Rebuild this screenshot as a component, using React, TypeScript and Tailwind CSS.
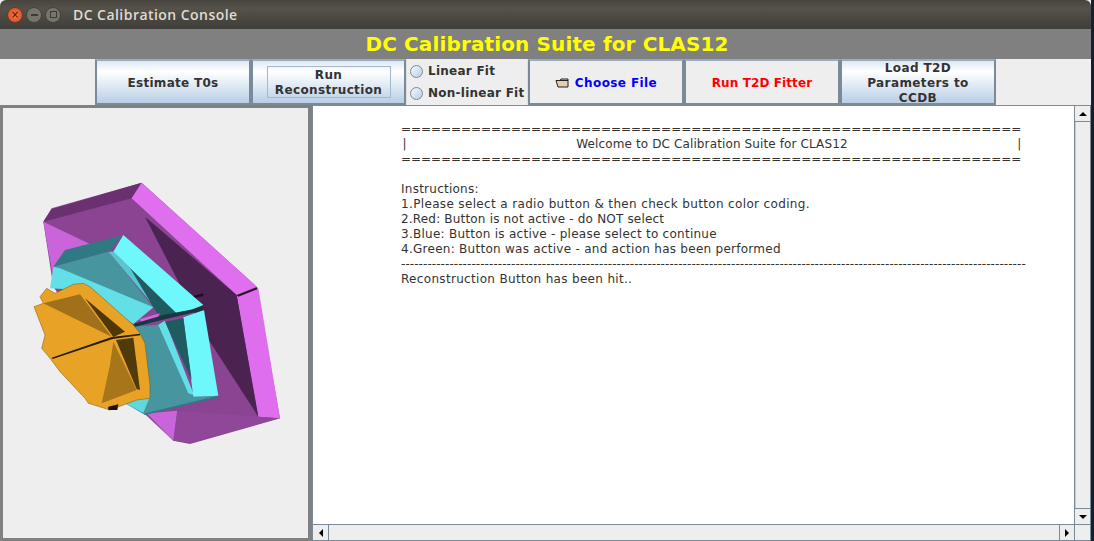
const sans = "font-['DejaVu_Sans','Liberation_Sans',sans-serif]";

const btnGrad = "bg-[linear-gradient(to_bottom,#dde8f3_0%,#ffffff_25%,#b8cfe5_100%)]";

function ToolButton({
  className,
  children,
}: {
  className: string;
  children: React.ReactNode;
}) {
  return (
    <div
      className={
        "h-[46px] pt-[2px] flex items-center justify-center text-center border-[2px] border-[#7a8a99] border-t-[#9aabbb] text-[12px] font-bold leading-[15px] whitespace-nowrap " +
        className
      }
    >
      {children}
    </div>
  );
}

function Radio({ label }: { label: string }) {
  return (
    <div className="flex items-center gap-[5px] h-[22px] pl-[3px]">
      <div className="w-[13px] h-[13px] rounded-full border border-[#7a8a99] bg-[linear-gradient(135deg,#f4f8fc,#b8cfe5)]" />
      <span className="text-[12px] font-bold tracking-[0.25px] whitespace-nowrap text-[#333333]">{label}</span>
    </div>
  );
}

function Detector() {
  return (
    <svg className="w-[305px] h-[429px]" viewBox="3 108 305 429">
      {/* outer magenta frame */}
      <g transform="translate(20 170) scale(0.3333)">
        <polygon points="70,155 95,115 365,38 710,350 780,745 510,822 460,812 340,700 100,350" fill="#8a4492" />
        <polygon points="95,118 365,38 335,85 70,155" fill="#6b3070" />
        <polygon points="365,38 710,350 650,375 335,85" fill="#e06ff0" />
        <polygon points="650,375 715,355 780,745 715,740" fill="#df6eef" />
        <polygon points="70,155 210,222 100,290 105,355" fill="#c964da" />
        <polygon points="375,140 650,375 715,740 560,500" fill="#4a2350" />
        <polygon points="380,730 472,722 460,812" fill="#c964da" />
        <polygon points="472,722 715,740 780,745 510,818 460,812" fill="#90479a" />
        <polygon points="650,375 712,352 712,358 655,380" fill="#2a1430" />
        <polygon points="520,378 550,370 550,378 522,384" fill="#1c0e20" />
      </g>
      {/* cyan frame */}
      <g transform="translate(50 230) scale(0.3333)">
        <polygon points="10,110 45,60 220,15 175,65" fill="#2f7a82" />
        <polygon points="10,110 175,65 310,232 250,282" fill="#47959e" />
        <polygon points="10,110 30,115 310,232 250,282 90,180 0,175" fill="#62dfe7" />
        <polygon points="175,65 190,65 385,255 340,262" fill="#55c8cf" />
        <polygon points="235,105 385,252 330,265" fill="#1e5c62" />
        <polygon points="190,65 220,15 460,225 385,255" fill="#6ef8fc" />
        <polygon points="240,290 320,285 345,272 430,500 505,497 280,552 225,520 240,480" fill="#47959e" />
        <polygon points="225,520 270,490 300,500 280,548" fill="#5fd8e0" />
        <polygon points="280,552 505,497 505,503 285,555" fill="#2f7a82" />
        <polygon points="325,285 345,272 432,495 415,490" fill="#62dfe7" />
        <polygon points="400,262 462,240 505,497 430,500" fill="#6ef8fc" />
        <polygon points="345,275 400,265 425,450" fill="#1e5c62" />
        <polygon points="268,268 330,250 322,265 275,275" fill="#d066e0" />
        <polygon points="250,282 340,255 460,232 462,240 345,268 255,290" fill="#17393e" />
      </g>
      {/* orange end cap */}
      <g transform="translate(30 275) scale(0.3333)">
        <polygon
          points="12,95 40,85 30,65 50,40 75,55 130,28 160,25 180,35 310,150 330,175 345,205 360,330 360,370 320,375 240,405 175,385 165,370 90,290 60,250 35,220 45,180"
          fill="#e8a226"
          stroke="#7a560e"
          strokeWidth="1.5"
        />
        <polygon points="40,85 150,58 245,185" fill="#a0701a" />
        <polygon points="165,70 285,170 250,186" fill="#4f3808" />
        <polygon points="258,195 310,188 330,345 320,342" fill="#503a08" />
        <polygon points="250,200 320,345 215,385 240,270" fill="#a8761a" />
        <polygon points="65,248 245,186 330,176 330,181 248,192 68,252" fill="#2a1e06" />
        <polygon points="235,395 265,388 262,405 235,405" fill="#1c1404" />
      </g>
    </svg>
  );
}

export default function App() {
  return (
    <div className={"w-[1094px] h-[541px] overflow-hidden bg-[#16202c] " + sans}>
      <div className="w-[1091px] h-[541px] flex flex-col bg-[#eeeeee]">
        {/* window title bar */}
        <div className="h-[29px] shrink-0 flex items-center rounded-t-[6px] bg-[linear-gradient(to_bottom,#47443e_0%,#56524a_30%,#3e3d38_100%)]">
          <div className="flex items-center ml-[7px] gap-[3px]">
            <div className="w-[16px] h-[16px] rounded-full bg-[radial-gradient(circle,#f0794a,#d9471f)] border border-[#6b3a22] flex items-center justify-center text-[#3a1a10] text-[10px] leading-none">
              ×
            </div>
            <div className="w-[16px] h-[16px] rounded-full bg-[#77746b] border border-[#45433d] flex items-center justify-center">
              <div className="w-[7px] h-[2px] bg-[#3c3b37]" />
            </div>
            <div className="w-[16px] h-[16px] rounded-full bg-[#77746b] border border-[#45433d] flex items-center justify-center">
              <div className="w-[7px] h-[7px] border border-[#3c3b37]" />
            </div>
          </div>
          <span className="ml-[12px] font-['Open_Sans'] text-[14px] font-semibold tracking-[0.45px] text-[#dfdbd2]">
            DC Calibration Console
          </span>
        </div>

        {/* heading */}
        <div className="h-[30px] shrink-0 flex items-center justify-center pl-[3px] bg-[#808080] text-[#ffff00] text-[20px] font-bold tracking-[0.13px]">
          DC Calibration Suite for CLAS12
        </div>

        {/* toolbar */}
        <div className="h-[46px] shrink-0 flex pl-[95px] bg-[#eeeeee]">
          <ToolButton className={"w-[156px] text-[#333333] tracking-[0.3px] " + btnGrad}>Estimate T0s</ToolButton>
          <ToolButton className={"w-[155px] text-[#333333] tracking-[0.35px] " + btnGrad}>
            <div className="w-[124px] h-[32px] -mt-[2px] pt-[1px] border border-[#a3b8cc] flex items-center justify-center">
              Run
              <br />
              Reconstruction
            </div>
          </ToolButton>
          <div className="w-[122px] h-[46px] pt-[1px] border-x border-[#e0e0e0] bg-[#eeeeee]">
            <Radio label="Linear Fit" />
            <Radio label="Non-linear Fit" />
          </div>
          <ToolButton className="w-[156px] bg-[#eeeeee] text-[#0000ff] gap-[6px] tracking-[0.4px]">
            <svg width="14" height="10" viewBox="0 0 14 10">
              <path d="M1 2.5h4l1-1.5h7v8H3z" fill="#e8cdb0" stroke="#222" strokeWidth="1" />
              <path d="M1 2.5h12" stroke="#222" strokeWidth="1" />
            </svg>
            Choose File
          </ToolButton>
          <ToolButton className="w-[156px] bg-[#eeeeee] text-[#ff0000] tracking-[0.1px]">Run T2D Fitter</ToolButton>
          <ToolButton className={"w-[156px] text-[#333333] tracking-[0.4px] " + btnGrad}>
            Load T2D
            <br />
            Parameters to
            <br />
            CCDB
          </ToolButton>
        </div>

        {/* main area */}
        <div className="flex-1 flex min-h-0">
          <div className="w-[312px] shrink-0 border-[3px] border-r-[4px] border-[#808080] bg-[#eeeeee]">
            <Detector />
          </div>
          <div className="flex-1 flex flex-col min-w-0 border border-[#7a8a99]">
            <div className="flex-1 flex min-h-0">
              <div className="flex-1 bg-white pl-[88px] pt-[16px] text-[12px] leading-[15px] text-[#333333] whitespace-pre tracking-[0.32px]">
                <div className="tracking-[-0.05px]">==============================================================</div>
                <div className="w-[620.5px] flex justify-between pl-[1.5px] tracking-[0.12px]">
                  <span>|</span>
                  <span>Welcome to DC Calibration Suite for CLAS12</span>
                  <span>|</span>
                </div>
                <div className="tracking-[-0.05px]">==============================================================</div>
                <div>&nbsp;</div>
                <div className="tracking-[0.25px]">Instructions:</div>
                <div className="tracking-[0.35px]">1.Please select a radio button &amp; then check button color coding.</div>
                <div className="tracking-[0.18px]">2.Red: Button is not active - do NOT select</div>
                <div className="tracking-[0.26px]">3.Blue: Button is active - please select to continue</div>
                <div className="tracking-[0.27px]">4.Green: Button was active - and action has been performed</div>
                <div className="tracking-[0.07px]">----------------------------------------------------------------------------------------------------------------------------------------------</div>
                <div>Reconstruction Button has been hit..</div>
              </div>
              {/* vertical scrollbar */}
              <div className="w-[16px] shrink-0 flex flex-col border-l border-[#7a8a99] bg-[#eeeeee]">
                <div className="h-[16px] flex items-center justify-center border-b border-[#7a8a99]">
                  <div className="w-0 h-0 border-x-[4px] border-x-transparent border-b-[4px] border-b-black" />
                </div>
                <div className="flex-1 border-l border-[#b8cfe5]" />
                <div className="h-[16px] flex items-center justify-center border-t border-[#7a8a99]">
                  <div className="w-0 h-0 border-x-[4px] border-x-transparent border-t-[4px] border-t-black" />
                </div>
              </div>
            </div>
            {/* horizontal scrollbar */}
            <div className="h-[16px] shrink-0 flex border-t border-[#7a8a99] bg-[#eeeeee]">
              <div className="w-[16px] flex items-center justify-center border-r border-[#7a8a99]">
                <div className="w-0 h-0 border-y-[4px] border-y-transparent border-r-[4px] border-r-black" />
              </div>
              <div className="flex-1" />
              <div className="w-[16px] flex items-center justify-center border-x border-[#7a8a99]">
                <div className="w-0 h-0 border-y-[4px] border-y-transparent border-l-[4px] border-l-black" />
              </div>
              <div className="w-[15px]" />
            </div>
          </div>
        </div>
      </div>
    </div>
  );
}
